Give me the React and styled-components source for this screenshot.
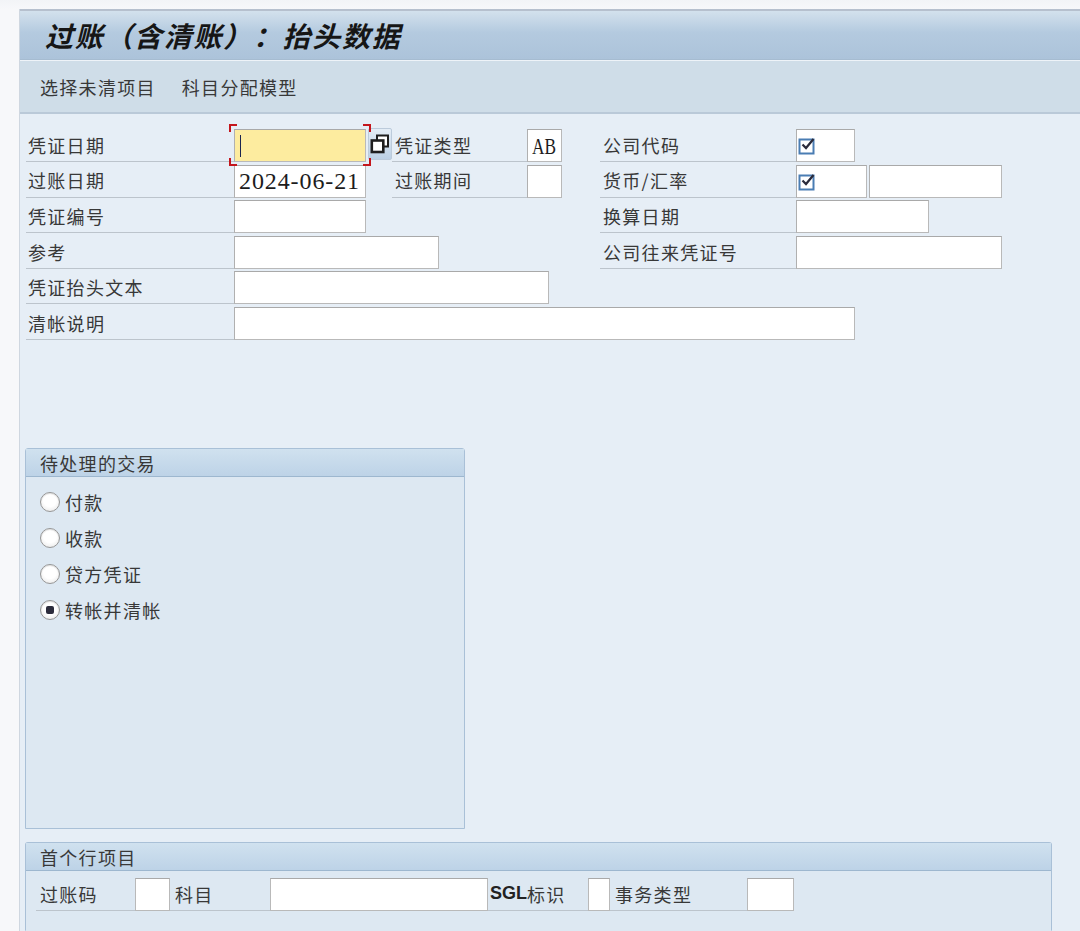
import React from 'react';
import styled, { createGlobalStyle } from 'styled-components';

const GlobalStyle = createGlobalStyle`
  html, body { margin: 0; padding: 0; background: #f7f8fa; }
  body { font-family: "Noto Sans CJK SC", "Noto Sans", sans-serif; color: #333; text-spacing-trim: space-all; }
  * { box-sizing: border-box; }
`;

const Page = styled.div`
  height: 931px;
  overflow: hidden;
  padding: 9px 0 0 19px;
  background: linear-gradient(#f2f4f7, #f7f8fa 9px);
`;

const Window = styled.div`
  height: 100%;
  display: flex;
  flex-direction: column;
  border-left: 1px solid #cfd7e0;
  background: #e6eef6;
`;

const TitleBar = styled.div`
  height: 51px;
  flex: none;
  display: flex;
  align-items: center;
  padding-left: 25px;
  border-top: 2px solid #b6c0ce;
  border-bottom: 1px solid #a6bcd1;
  background: linear-gradient(#d3e1ed 0%, #b4cadf 45%, #acc3da 100%);
`;

const Title = styled.h1`
  margin: 0;
  font-size: 28px;
  font-weight: 700;
  font-style: italic;
  letter-spacing: 1.7px;
  color: #161616;
  line-height: 1;
  text-spacing-trim: space-all;
`;

const Toolbar = styled.div`
  height: 54px;
  flex: none;
  display: flex;
  align-items: center;
  gap: 26px;
  padding-left: 20px;
  border-top: 1px solid #eef3f8;
  border-bottom: 2px solid #bac9d8;
  background: #cfdde8;
`;

const ToolButton = styled.span`
  font-size: 18px;
  letter-spacing: 1.3px;
  color: #383838;
`;

const Content = styled.div`
  flex: 1;
  display: flex;
  flex-direction: column;
  padding: 12.5px 0 0 5px;
`;

const FormGrid = styled.div`
  margin-left: 1px;
  display: grid;
  grid-template-columns: 208px 132px 26px 135px 35px 38px 196px 1fr;
  grid-auto-rows: 35.6px;
`;

const Label = styled.div`
  grid-column: ${p => p.$col || 'auto'};
  display: flex;
  align-items: center;
  padding: 2px 0 0 ${p => p.$pad ?? 2}px;
  border-bottom: 1px solid #bcc4cc;
  font-size: 18px;
  letter-spacing: 1.3px;
  color: #383838;
  white-space: nowrap;
`;

const Field = styled.div`
  grid-column: ${p => p.$col || 'auto'};
  justify-self: start;
  align-self: end;
  width: ${p => p.$w}px;
  height: 33px;
  display: flex;
  align-items: center;
  padding-left: ${p => p.$padL ?? 4}px;
  background: ${p => (p.$focus ? '#fdec9f' : '#fff')};
  border: 1px solid #b9b9b9;
  border-top-color: #a9a9a9;
  border-left-color: #b0b0b0;
  overflow: hidden;
`;

const FieldPair = styled.div`
  grid-column: ${p => p.$col || 'auto'};
  align-self: end;
  display: flex;
  gap: 2px;
`;

const FocusWrap = styled.div`
  grid-column: 2;
  align-self: end;
  position: relative;
  width: 132px;
  height: 34px;
  display: flex;
  align-items: flex-end;
`;

const Corner = styled.span`
  position: absolute;
  width: 8px;
  height: 8px;
  border: 0 solid #c4161c;
  ${p => (p.$v === 'top' ? 'top: -4px; border-top-width: 2px;' : 'bottom: -4px; border-bottom-width: 2px;')}
  ${p => (p.$h === 'left' ? 'left: -5px; border-left-width: 2px;' : 'right: -5px; border-right-width: 2px;')}
`;

const Caret = styled.span`
  width: 1px;
  height: 22px;
  margin-left: 1px;
  background: #1b2550;
`;

const SerifValue = styled.span`
  font-family: "Liberation Serif", "Times New Roman", serif;
  font-size: 24px;
  letter-spacing: ${p => p.$ls ?? 0.9}px;
  color: #1c1c1c;
  line-height: 1;
  display: inline-block;
  transform: scaleX(${p => p.$sx ?? 1});
  transform-origin: left center;
  white-space: nowrap;
`;

const F4Button = styled.div`
  grid-column: 3;
  align-self: end;
  margin: 0 0 2px 2px;
  width: 24px;
  height: 32px;
  display: flex;
  align-items: center;
  justify-content: center;
  border: 1px solid #bccbdb;
  border-radius: 2px;
  background: linear-gradient(#e4edf6, #bcd0e4);
`;

const Group = styled.section`
  width: ${p => p.$w}px;
  margin-top: ${p => p.$mt}px;
  ${p => (p.$h ? `height: ${p.$h}px;` : 'flex: 1;')}
  display: flex;
  flex-direction: column;
  border: 1px solid #a9c0d7;
  border-bottom-color: ${p => (p.$h ? '#a9c0d7' : 'transparent')};
  border-radius: 3px 3px 0 0;
  background: #dde8f2;
`;

const GroupHeader = styled.div`
  height: 28px;
  flex: none;
  display: flex;
  align-items: center;
  padding-left: 14px;
  border-bottom: 1px solid #9db7cf;
  background: linear-gradient(#d0e1ef, #bdd3e7);
  font-size: 18px;
  letter-spacing: 1.3px;
  color: #383838;
`;

const RadioList = styled.div`
  display: flex;
  flex-direction: column;
  padding: 7px 0 0 14px;
`;

const RadioRow = styled.label`
  height: 36px;
  display: flex;
  align-items: center;
  gap: 5px;
  font-size: 18px;
  letter-spacing: 1.3px;
  color: #383838;
`;

const RadioCircle = styled.span`
  position: relative;
  width: 20px;
  height: 20px;
  flex: none;
  border-radius: 50%;
  border: 1px solid #969696;
  background: radial-gradient(circle at 50% 40%, #ffffff 45%, #e2e2e2 100%);
  box-shadow: inset 0 1px 1px rgba(0, 0, 0, 0.12);
  &::after {
    content: '';
    display: ${p => (p.$checked ? 'block' : 'none')};
    position: absolute;
    left: 5px;
    top: 5px;
    width: 8px;
    height: 8px;
    border-radius: 2px;
    background: #2c2c3c;
  }
`;

const LineRow = styled.div`
  display: flex;
  align-items: flex-end;
  height: 36px;
  margin-top: 4px;
  padding-left: 10px;
`;

const RowLabel = styled.div`
  width: ${p => p.$w}px;
  height: 100%;
  display: flex;
  align-items: center;
  padding: 2px 0 0 ${p => p.$pad ?? 4}px;
  border-bottom: 1px solid #bcc4cc;
  font-size: 18px;
  letter-spacing: 1.3px;
  color: #383838;
  white-space: nowrap;
`;

const RowField = styled.div`
  width: ${p => p.$w}px;
  height: 33px;
  flex: none;
  background: #fff;
  border: 1px solid #b9b9b9;
  border-top-color: #a9a9a9;
`;

const Latin = styled.span`
  font-family: "Liberation Sans", Arial, sans-serif;
  font-weight: 700;
  letter-spacing: 0;
  color: #222;
`;

const CheckIcon = () => (
  <svg width="19" height="19" viewBox="0 0 19 19">
    <rect x="1.5" y="3.5" width="14" height="14" fill="none" stroke="#4a7db3" strokeWidth="2" />
    <path d="M4.5 8.5 L8 12 L15.5 3" fill="none" stroke="#2a2a3a" strokeWidth="2.2" />
  </svg>
);

const CopyIcon = () => (
  <svg width="20" height="20" viewBox="0 0 20 20">
    <rect x="7" y="1.5" width="11" height="11" fill="#fff" stroke="#1e1e1e" strokeWidth="2" />
    <rect x="1.8" y="6.5" width="11.5" height="11.5" fill="#fff" stroke="#1e1e1e" strokeWidth="2.6" />
  </svg>
);

export default function App() {
  return (
    <>
      <GlobalStyle />
      <Page>
        <Window>
          <TitleBar>
            <Title>过账（含清账）：抬头数据</Title>
          </TitleBar>
          <Toolbar>
            <ToolButton>选择未清项目</ToolButton>
            <ToolButton>科目分配模型</ToolButton>
          </Toolbar>
          <Content>
            <FormGrid>
              {/* row 1 */}
              <Label $col="1">凭证日期</Label>
              <FocusWrap>
                <Field $w={132} $focus>
                  <Caret />
                </Field>
                <Corner $v="top" $h="left" />
                <Corner $v="top" $h="right" />
                <Corner $v="bottom" $h="left" />
                <Corner $v="bottom" $h="right" />
              </FocusWrap>
              <F4Button>
                <CopyIcon />
              </F4Button>
              <Label $col="4" $pad={3}>凭证类型</Label>
              <Field $col="5" $w={35} $padL={4}>
                <SerifValue $sx={0.72} $ls={0}>AB</SerifValue>
              </Field>
              <Label $col="7" $pad={3}>公司代码</Label>
              <Field $col="8" $w={59} $padL={1}>
                <CheckIcon />
              </Field>

              {/* row 2 */}
              <Label $col="1">过账日期</Label>
              <Field $col="2" $w={132}>
                <SerifValue>2024-06-21</SerifValue>
              </Field>
              <Label $col="4" $pad={3}>过账期间</Label>
              <Field $col="5" $w={35} />
              <Label $col="7" $pad={3}>货币/汇率</Label>
              <FieldPair $col="8">
                <Field $w={71} $padL={1}>
                  <CheckIcon />
                </Field>
                <Field $w={133} />
              </FieldPair>

              {/* row 3 */}
              <Label $col="1">凭证编号</Label>
              <Field $col="2" $w={132} />
              <Label $col="7" $pad={3}>换算日期</Label>
              <Field $col="8" $w={133} />

              {/* row 4 */}
              <Label $col="1">参考</Label>
              <Field $col="2 / span 4" $w={205} />
              <Label $col="7" $pad={3}>公司往来凭证号</Label>
              <Field $col="8" $w={206} />

              {/* row 5 */}
              <Label $col="1">凭证抬头文本</Label>
              <Field $col="2 / span 5" $w={315} />

              {/* row 6 */}
              <Label $col="1">清帐说明</Label>
              <Field $col="2 / -1" $w={621} />
            </FormGrid>

            <Group $w={440} $mt={108} $h={381}>
              <GroupHeader>待处理的交易</GroupHeader>
              <RadioList>
                <RadioRow><RadioCircle />付款</RadioRow>
                <RadioRow><RadioCircle />收款</RadioRow>
                <RadioRow><RadioCircle />贷方凭证</RadioRow>
                <RadioRow><RadioCircle $checked />转帐并清帐</RadioRow>
              </RadioList>
            </Group>

            <Group $w={1027} $mt={13}>
              <GroupHeader>首个行项目</GroupHeader>
              <LineRow>
                <RowLabel $w={99}>过账码</RowLabel>
                <RowField $w={35} />
                <RowLabel $w={100} $pad={5}>科目</RowLabel>
                <RowField $w={218} />
                <RowLabel $w={100} $pad={2}><Latin>SGL</Latin>标识</RowLabel>
                <RowField $w={22} />
                <RowLabel $w={137} $pad={5}>事务类型</RowLabel>
                <RowField $w={47} />
              </LineRow>
            </Group>
          </Content>
        </Window>
      </Page>
    </>
  );
}
